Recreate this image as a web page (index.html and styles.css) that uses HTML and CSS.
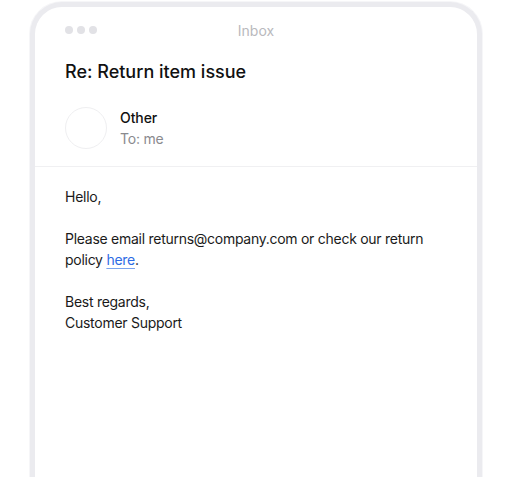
FILE: index.html
```html
<!DOCTYPE html>
<html>
<head>
<meta charset="utf-8">
<link rel="stylesheet" href="styles.css">
</head>
<body>
<div class="frame">
  <div class="topbar">
    <div class="dots"><span class="dot"></span><span class="dot"></span><span class="dot"></span></div>
    <div class="label">Inbox</div>
  </div>
  <h1 class="subject">Re: Return item issue</h1>
  <div class="sender">
    <div class="avatar"></div>
    <div class="meta">
      <div class="name">Other</div>
      <div class="to">To: me</div>
    </div>
  </div>
  <div class="body">
    <p>Hello,</p>
    <p>Please email returns@company.com or check our return policy <a href="#" class="link">here</a>.</p>
    <p>Best regards,<br>Customer Support</p>
  </div>
</div>
</body>
</html>
```
FILE: styles.css
```css
html, body { margin: 0; padding: 0; background: #fff; }
body { font-family: Inter, "Noto Sans", sans-serif; color: #111; }
.frame {
  box-sizing: border-box;
  margin: 2px 0 0 30px;
  width: 452px;
  height: 475px;
  border: 5px solid #ebebef;
  border-bottom: none;
  border-radius: 32px 32px 0 0;
  box-shadow: 0 0 0 1px #f6f6f8;
  background: #fff;
}
.topbar {
  position: relative;
  height: 46px;
  display: flex;
  align-items: center;
  padding: 0 30px;
}
.dots { display: flex; gap: 4px; }
.dot { width: 8px; height: 8px; border-radius: 50%; background: #e2e2e6; }
.label {
  position: absolute;
  left: 0; right: 0; top: 0; height: 46px;
  display: flex; align-items: center; justify-content: center;
  font-size: 14px; color: #b9b9bd;
}
.subject {
  margin: 0;
  padding: 7px 30px 0;
  font-size: 18px;
  font-weight: 500;
  line-height: 24px;
  color: #111;
}
.sender {
  display: flex;
  align-items: center;
  gap: 13px;
  padding: 23px 30px 17px;
  border-bottom: 1px solid #f0f0f2;
}
.avatar {
  width: 42px; height: 42px;
  box-sizing: border-box;
  border-radius: 50%;
  border: 1px solid #efeff1;
}
.meta { display: flex; flex-direction: column; gap: 1px; }
.name { font-size: 14px; font-weight: 500; line-height: 20px; color: #111; letter-spacing: -0.1px; }
.to { font-size: 14px; line-height: 20px; color: #8a8a8e; letter-spacing: -0.2px; }
.body { padding: 19px 30px; font-size: 14px; line-height: 21px; color: #1a1a1a; letter-spacing: -0.27px; }
.body p { margin: 0 0 21px; }
.link { color: #2d6be4; text-decoration: underline; text-underline-offset: 3px; text-decoration-color: #7aa3ee; }
```
